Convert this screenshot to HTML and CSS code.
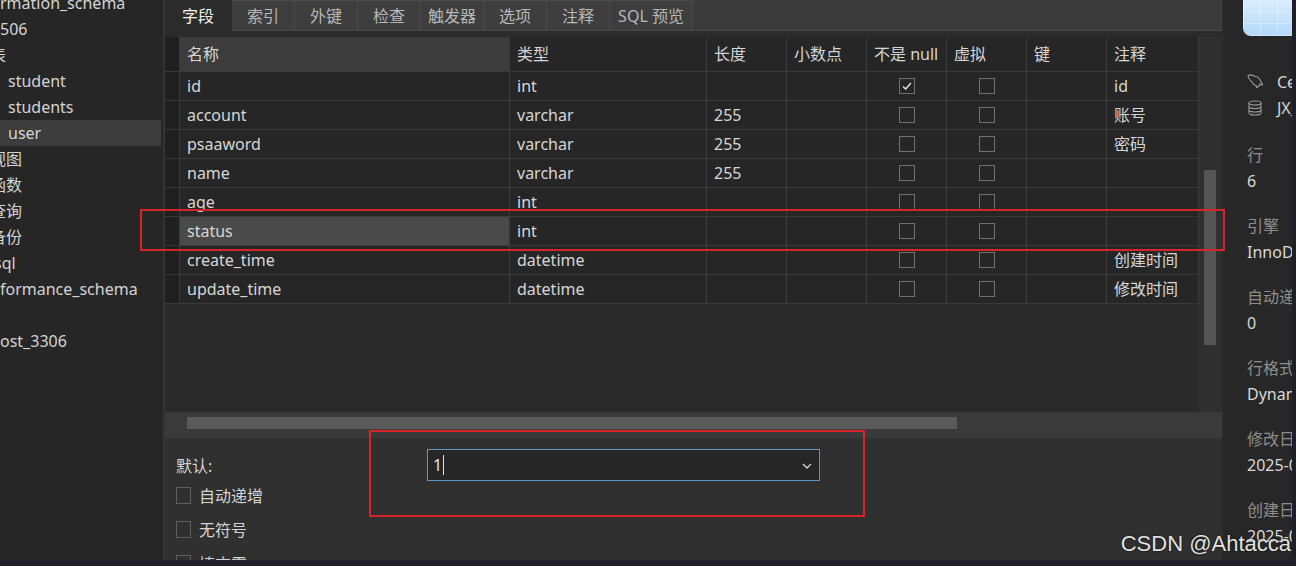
FILE: index.html
```html
<!DOCTYPE html>
<html lang="zh-CN">
<head>
  <meta charset="UTF-8">
  <meta name="viewport" content="width=device-width, initial-scale=1.0">
  <title>user @ 设计表</title>
  <link rel="stylesheet" href="styles.css">
</head>
<body>

  <div id="window">

    <div id="sidebar">
      <div class="node first">rmation_schema</div>
      <div class="node">506</div>
      <div class="node cut">表</div>
      <div class="node leaf">student</div>
      <div class="node leaf">students</div>
      <div class="node leaf selected">user</div>
      <div class="node cut">视图</div>
      <div class="node cut">函数</div>
      <div class="node cut">查询</div>
      <div class="node cut">备份</div>
      <div class="node cut-latin">sql</div>
      <div class="node">formance_schema</div>
      <div class="node"></div>
      <div class="node">ost_3306</div>
    </div>

    <div id="main">
      <div class="tabs">
        <div class="tab active">字段</div>
        <div class="tab">索引</div>
        <div class="tab">外键</div>
        <div class="tab">检查</div>
        <div class="tab narrow">触发器</div>
        <div class="tab">选项</div>
        <div class="tab">注释</div>
        <div class="tab wide">SQL 预览</div>
      </div>
      <div class="strip"></div>

      <div class="grid-area">
        <div class="fields">
          <div class="row head">
            <div class="cell mark"></div>
            <div class="cell sorted">名称</div>
            <div class="cell">类型</div>
            <div class="cell">长度</div>
            <div class="cell">小数点</div>
            <div class="cell">不是 null</div>
            <div class="cell">虚拟</div>
            <div class="cell">键</div>
            <div class="cell">注释</div>
          </div>
          <div class="row">
            <div class="cell mark"></div>
            <div class="cell">id</div>
            <div class="cell">int</div>
            <div class="cell"></div>
            <div class="cell"></div>
            <div class="cell check"><span class="box on"><svg viewBox="0 0 16 16"><polyline points="3.5,8.5 6.5,11.5 12.5,4.5"/></svg></span></div>
            <div class="cell check"><span class="box"></span></div>
            <div class="cell"></div>
            <div class="cell">id</div>
          </div>
          <div class="row">
            <div class="cell mark"></div>
            <div class="cell">account</div>
            <div class="cell">varchar</div>
            <div class="cell">255</div>
            <div class="cell"></div>
            <div class="cell check"><span class="box"></span></div>
            <div class="cell check"><span class="box"></span></div>
            <div class="cell"></div>
            <div class="cell">账号</div>
          </div>
          <div class="row">
            <div class="cell mark"></div>
            <div class="cell">psaaword</div>
            <div class="cell">varchar</div>
            <div class="cell">255</div>
            <div class="cell"></div>
            <div class="cell check"><span class="box"></span></div>
            <div class="cell check"><span class="box"></span></div>
            <div class="cell"></div>
            <div class="cell">密码</div>
          </div>
          <div class="row">
            <div class="cell mark"></div>
            <div class="cell">name</div>
            <div class="cell">varchar</div>
            <div class="cell">255</div>
            <div class="cell"></div>
            <div class="cell check"><span class="box"></span></div>
            <div class="cell check"><span class="box"></span></div>
            <div class="cell"></div>
            <div class="cell"></div>
          </div>
          <div class="row">
            <div class="cell mark"></div>
            <div class="cell">age</div>
            <div class="cell">int</div>
            <div class="cell"></div>
            <div class="cell"></div>
            <div class="cell check"><span class="box"></span></div>
            <div class="cell check"><span class="box"></span></div>
            <div class="cell"></div>
            <div class="cell"></div>
          </div>
          <div class="row">
            <div class="cell mark"></div>
            <div class="cell current">status</div>
            <div class="cell">int</div>
            <div class="cell"></div>
            <div class="cell"></div>
            <div class="cell check"><span class="box"></span></div>
            <div class="cell check"><span class="box"></span></div>
            <div class="cell"></div>
            <div class="cell"></div>
          </div>
          <div class="row">
            <div class="cell mark"></div>
            <div class="cell">create_time</div>
            <div class="cell">datetime</div>
            <div class="cell"></div>
            <div class="cell"></div>
            <div class="cell check"><span class="box"></span></div>
            <div class="cell check"><span class="box"></span></div>
            <div class="cell"></div>
            <div class="cell">创建时间</div>
          </div>
          <div class="row">
            <div class="cell mark"></div>
            <div class="cell">update_time</div>
            <div class="cell">datetime</div>
            <div class="cell"></div>
            <div class="cell"></div>
            <div class="cell check"><span class="box"></span></div>
            <div class="cell check"><span class="box"></span></div>
            <div class="cell"></div>
            <div class="cell">修改时间</div>
          </div>
        </div>
        <div class="vscroll"><div class="thumb"></div></div>
      </div>

      <div class="hscroll"><div class="thumb"></div></div>

      <div class="options">
        <div class="default-row">
          <span class="label">默认:</span>
          <div class="combo">
            <span class="value">1</span><span class="caret"></span>
            <svg class="chevron" viewBox="0 0 10 6"><polyline points="1,1 5,5 9,1"/></svg>
          </div>
        </div>
        <label class="opt"><span class="box"></span>自动递增</label>
        <label class="opt"><span class="box"></span>无符号</label>
        <label class="opt"><span class="box"></span>填充零</label>
      </div>
    </div>

    <div id="info">
      <div class="cover"></div>
      <div class="conn top">
        <svg class="icon" viewBox="0 0 18 18"><path d="M2 2.5 C4 1.5 7 2 9 3.5 C11 3.5 13.5 5 14.5 8 C15.5 9.5 16.5 10.5 16.5 12 C15 12 14.5 11.5 14 11 C13.5 13 12 14 10.5 14.5 L10 12.5 C8 12 6.5 10.5 5.5 8.5 C4 7.5 2.5 5.5 2 2.5 Z"/></svg>
        <span>CentOS</span>
      </div>
      <div class="conn">
        <svg class="icon" viewBox="0 0 18 18"><ellipse cx="9" cy="4" rx="6" ry="2"/><path d="M3 4 V14 C3 15.2 5.7 16 9 16 C12.3 16 15 15.2 15 14 V4 M3 7.5 C3 8.7 5.7 9.5 9 9.5 C12.3 9.5 15 8.7 15 7.5 M3 11 C3 12.2 5.7 13 9 13 C12.3 13 15 12.2 15 11"/></svg>
        <span>JX_mysql</span>
      </div>
      <div class="prop"><div class="key">行</div><div class="val">6</div></div>
      <div class="prop"><div class="key">引擎</div><div class="val">InnoDB</div></div>
      <div class="prop"><div class="key">自动递增</div><div class="val">0</div></div>
      <div class="prop"><div class="key">行格式</div><div class="val">Dynamic</div></div>
      <div class="prop"><div class="key">修改日期</div><div class="val">2025-03-12</div></div>
      <div class="prop"><div class="key">创建日期</div><div class="val">2025-03-12</div></div>
    </div>

  </div>

  <div class="annot row-annot"></div>
  <div class="annot combo-annot"></div>
  <div class="watermark">CSDN @Ahtacca</div>

</body>
</html>
```

FILE: styles.css
```css
body {
  margin: 0;
  width: 1296px;
  height: 566px;
  overflow: hidden;
  background-color: #1e1f27;
  font-family: "Noto Sans", "Noto Sans CJK SC", sans-serif;
  font-size: 16px;
  color: #d6d6d6;
  position: relative;
}
#window {
  display: flex;
  width: 1292px;
  height: 560px;
  background-color: #262626;
  border-bottom-right-radius: 6px;
  overflow: hidden;
}

/* tree on the left */
#sidebar {
  width: 163px;
  flex-shrink: 0;
  border-right: 2px solid #343434;
  overflow: hidden;
}
.node {
  height: 26px;
  line-height: 26px;
  white-space: nowrap;
  color: #d4d4d4;
}
.node.first {
  margin-top: -10px;
}
.node.leaf {
  padding-left: 8px;
}
.node.selected {
  background-color: #3c3c3c;
  margin-right: 2px;
}
.node.cut {
  text-indent: -10px;
}
.node.cut-latin {
  text-indent: -6px;
}

/* main designer */
#main {
  width: 1057px;
  flex-shrink: 0;
  display: flex;
  flex-direction: column;
  background-color: #2a2a2a;
  overflow: hidden;
}
.tabs {
  display: flex;
  height: 30px;
  flex-shrink: 0;
  background-color: #3b3b3b;
  border-bottom: 1px solid #4a4a4a;
}
.tab {
  padding: 0 15px;
  line-height: 30px;
  color: #b8b8b8;
  background-color: #3e3e3e;
  border-right: 1px solid #4b4b4b;
  border-top: 1px solid #4b4b4b;
  box-sizing: border-box;
  white-space: nowrap;
}
.tab.active {
  background-color: #2b2b2b;
  color: #f2f2f2;
  padding: 0 17px;
  border-color: #2b2b2b;
  height: 31px;
}
.tab.narrow {
  padding: 0 7px;
}
.tab.wide {
  padding: 0 8px;
}
.strip {
  height: 6px;
  flex-shrink: 0;
  background-color: #2b2b2b;
}
.grid-area {
  display: flex;
  height: 375px;
  flex-shrink: 0;
}
.fields {
  width: 1034px;
  background-color: #2a2a2a;
}
.row {
  display: grid;
  grid-template-columns: 15px 330px 197px 80px 80px 80px 80px 80px 92px;
  height: 29px;
  border-bottom: 1px solid #3a3a3a;
  box-sizing: border-box;
  background-color: #262626;
}
.row.head {
  height: 35px;
}
.cell {
  border-right: 1px solid #3a3a3a;
  padding-left: 7px;
  line-height: 28px;
  white-space: nowrap;
  overflow: hidden;
}
.row.head .cell {
  line-height: 34px;
}
.cell.mark {
  background-color: #202020;
  padding: 0;
}
.cell.sorted {
  background-color: #3c3c3c;
}
.cell.current {
  background-color: #4a4a4a;
}
.cell.check {
  display: flex;
  align-items: center;
  justify-content: center;
  padding: 0;
}
.box {
  display: inline-block;
  width: 16px;
  height: 16px;
  border: 1px solid #707070;
  box-sizing: border-box;
}
.box svg {
  width: 14px;
  height: 14px;
  fill: none;
  stroke: #e6e6e6;
  stroke-width: 1.6;
  display: block;
}
.vscroll {
  width: 23px;
  background-color: #303030;
  position: relative;
}
.vscroll .thumb {
  position: absolute;
  left: 5px;
  top: 133px;
  width: 12px;
  height: 175px;
  background-color: #555555;
}
.hscroll {
  height: 26px;
  flex-shrink: 0;
  background-color: #3a3a3a;
  padding: 5px 0 0 22px;
  box-sizing: border-box;
}
.hscroll .thumb {
  width: 770px;
  height: 12px;
  background-color: #5a5a5a;
}

/* options under the grid */
.options {
  flex: 1;
  min-height: 0;
  overflow: hidden;
  background-color: #303030;
  padding: 11px 0 0 11px;
}
.default-row {
  display: flex;
  align-items: center;
  height: 32px;
}
.label {
  width: 251px;
  color: #d4d4d4;
}
.combo {
  width: 393px;
  height: 32px;
  box-sizing: border-box;
  border: 1px solid #5b96c9;
  background-color: #262626;
  display: flex;
  align-items: center;
  padding-left: 5px;
  position: relative;
}
.combo .value {
  color: #e0e0e0;
}
.combo .caret {
  width: 1px;
  height: 20px;
  background-color: #e0e0e0;
  margin-left: 1px;
}
.combo .chevron {
  position: absolute;
  right: 7px;
  top: 13px;
  width: 10px;
  height: 6px;
  fill: none;
  stroke: #d0d0d0;
  stroke-width: 1.4;
}
.opt {
  display: flex;
  align-items: center;
  height: 20px;
  margin-top: 14px;
  color: #d4d4d4;
}
.default-row + .opt {
  margin-top: 4px;
}
.opt .box {
  width: 15px;
  height: 17px;
  margin-right: 8px;
  border-color: #5e5e5e;
}

/* info panel on the right */
#info {
  width: 70px;
  flex-shrink: 0;
  border-left: 1px solid #2f2f2f;
  box-sizing: border-box;
  overflow: hidden;
  white-space: nowrap;
  background-color: #272727;
}
.cover {
  margin-left: 20px;
  width: 60px;
  height: 36px;
  border-bottom-left-radius: 8px;
  background-color: #bfe0fb;
  background-image:
    linear-gradient(90deg, rgba(255,255,255,0.35) 1px, transparent 1px),
    linear-gradient(0deg, rgba(255,255,255,0.35) 1px, transparent 1px),
    linear-gradient(180deg, #d9edfd 0%, #b2d8fa 100%);
  background-size: 17px 17px, 17px 12px, 100% 100%;
}
.conn {
  display: flex;
  align-items: center;
  height: 26px;
  padding-left: 23px;
}
.conn.top {
  margin-top: 33px;
}
.conn .icon {
  width: 18px;
  height: 18px;
  fill: none;
  stroke: #9a9a9a;
  stroke-width: 1.1;
  margin-right: 13px;
  flex-shrink: 0;
}
.conn span {
  color: #d6d6d6;
}
.prop {
  padding-left: 24px;
  margin-top: 19px;
}
.conn + .prop {
  margin-top: 21px;
}
.key {
  line-height: 26px;
  color: #8e8e8e;
}
.val {
  line-height: 26px;
  color: #d8d8d8;
}

/* screenshot annotations and watermark on top */
.annot {
  position: absolute;
  border: 2px solid #d8232a;
  box-sizing: border-box;
}
.row-annot {
  left: 140px;
  top: 209px;
  width: 1085px;
  height: 42px;
}
.combo-annot {
  left: 369px;
  top: 430px;
  width: 496px;
  height: 87px;
}
.watermark {
  position: absolute;
  right: 5px;
  top: 531px;
  font-family: "Liberation Sans", Arial, sans-serif;
  font-size: 22px;
  color: #e2e2e2;
  text-shadow: 0 0 2px #000000;
}
```
